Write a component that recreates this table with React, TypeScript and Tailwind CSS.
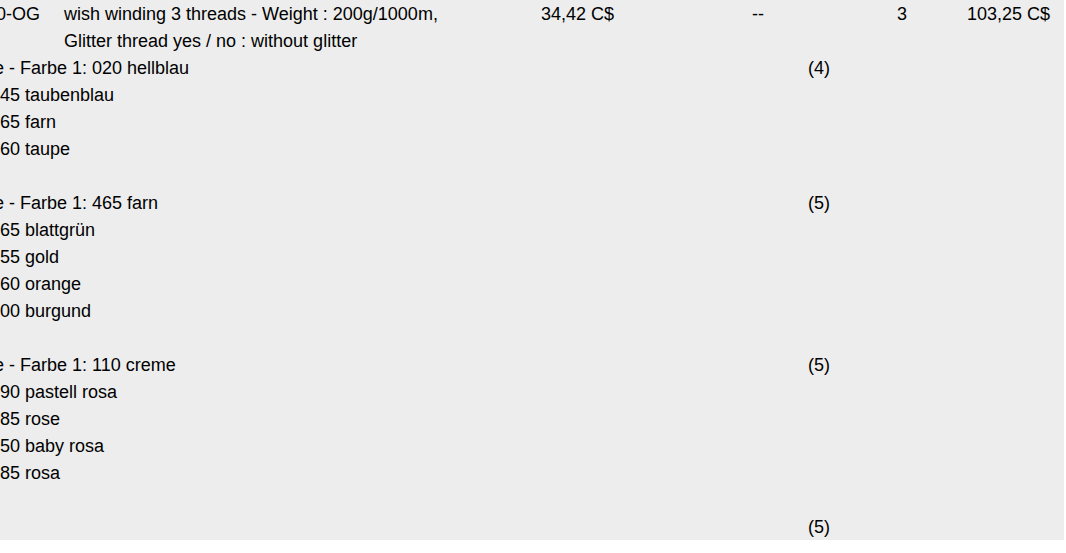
export default function App() {
  const groups = [
    { head: "e - Farbe 1: 020 hellblau", count: "(4)", items: ["45 taubenblau", "65 farn", "60 taupe"] },
    { head: "e - Farbe 1: 465 farn", count: "(5)", items: ["65 blattgrün", "55 gold", "60 orange", "00 burgund"] },
    { head: "e - Farbe 1: 110 creme", count: "(5)", items: ["90 pastell rosa", "85 rose", "50 baby rosa", "85 rosa"] },
    { head: "", count: "(5)", items: [] },
  ];
  return (
    <div className="w-[1064px] h-[540px] pt-[1px] bg-[#ededed] text-black text-[18px] leading-[27px] whitespace-nowrap overflow-hidden" style={{ fontFamily: '"Liberation Sans", Arial, sans-serif' }}>
      <div className="flex h-[27px] -ml-[4px]">
        <span className="w-[68px]">0-OG</span>
        <span className="w-[477px]">wish winding 3 threads - Weight : 200g/1000m,</span>
        <span className="w-[211px]">34,42 C$</span>
        <span className="w-[145px]">--</span>
        <span className="w-[70px]">3</span>
        <span>103,25 C$</span>
      </div>
      <div className="flex h-[27px]">
        <span className="w-[64px]"></span>
        <span>Glitter thread yes / no : without glitter</span>
      </div>
      {groups.map((g, i) => (
        <div key={i} className="flex flex-col">
          {i > 0 && <div className="h-[27px]"></div>}
          <div className="flex h-[27px] -ml-[6px]">
            <span className="w-[814px]">{g.head}</span>
            <span>{g.count}</span>
          </div>
          {g.items.map((it) => (
            <div key={it} className="h-[27px]">{it}</div>
          ))}
        </div>
      ))}
    </div>
  );
}
